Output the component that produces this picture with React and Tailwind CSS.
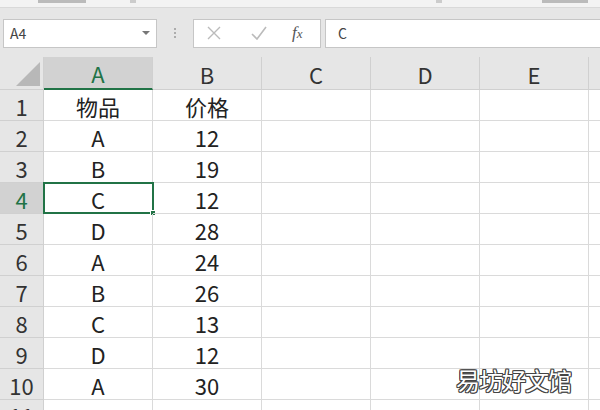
import React from 'react';

const cols = ['A', 'B', 'C', 'D', 'E'];
const rows = [
  ['物品', '价格'],
  ['A', '12'],
  ['B', '19'],
  ['C', '12'],
  ['D', '28'],
  ['A', '24'],
  ['B', '26'],
  ['C', '13'],
  ['D', '12'],
  ['A', '30'],
];

const font = { fontFamily: '"Noto Sans CJK SC", "Noto Sans", sans-serif' };

export default function App() {
  return (
    <div className="w-[600px] h-[410px] overflow-hidden bg-[#e6e6e6] relative" style={font}>
      {/* ribbon remnant */}
      <div className="h-[8px] bg-[#f3f3f3] border-b border-[#d9d9d9] flex items-start">
        <span className="ml-[38px] w-[48px] h-[3px] bg-[#bbb]" />
        <span className="ml-[44px] w-[6px] h-[3px] bg-[#ccc]" />
        <span className="ml-[300px] w-[6px] h-[3px] bg-[#ccc]" />
        <span className="ml-[100px] w-[46px] h-[3px] bg-[#bbb]" />
      </div>

      {/* formula bar */}
      <div className="flex items-center h-[30px] mt-[10px]">
        <div className="ml-[3px] w-[154px] h-[29px] bg-white border border-[#c6c6c6] flex items-center justify-between px-[6px]">
          <span className="text-[14px] text-[#444]">A4</span>
          <svg width="8" height="5" viewBox="0 0 8 5"><path d="M0 0 L8 0 L4 4 Z" fill="#777" /></svg>
        </div>
        <div className="w-[36px] flex flex-col items-center gap-[2px]">
          <span className="w-[2px] h-[2px] bg-[#999] rounded-full" />
          <span className="w-[2px] h-[2px] bg-[#999] rounded-full" />
          <span className="w-[2px] h-[2px] bg-[#999] rounded-full" />
        </div>
        <div className="w-[128px] h-[29px] bg-white border border-[#c6c6c6] flex items-center">
          <svg className="ml-[13px]" width="14" height="14" viewBox="0 0 14 14">
            <path d="M1 1 L13 13 M13 1 L1 13" stroke="#bbb" strokeWidth="1.4" />
          </svg>
          <svg className="ml-[30px]" width="16" height="14" viewBox="0 0 16 14">
            <path d="M1 8 L6 13 L15 1" stroke="#bbb" strokeWidth="1.6" fill="none" />
          </svg>
          <span className="ml-[25px] text-[17px] italic text-[#555]" style={{ fontFamily: '"Liberation Serif", serif' }}>
            f<span className="text-[13px]">x</span>
          </span>
        </div>
        <div className="ml-[4px] flex-1 h-[29px] bg-white border border-[#c6c6c6] border-r-0 flex items-center pl-[12px]">
          <span className="text-[14px] text-[#444]">C</span>
        </div>
      </div>

      {/* grid */}
      <div className="mt-[9px] bg-white">
        <div className="flex h-[33px]">
          <div className="w-[44px] shrink-0 bg-[#e6e6e6] border-r border-b border-[#d0d0d0] flex items-end justify-end p-[3px]">
            <svg width="24" height="24" viewBox="0 0 24 24"><path d="M24 0 L24 24 L0 24 Z" fill="#b8b8b8" /></svg>
          </div>
          {cols.map((c) => (
            <div
              key={c}
              className={`w-[109px] shrink-0 border-r border-[#d0d0d0] flex items-center justify-center text-[22px] pt-[2px] ${
                c === 'A' ? 'bg-[#d2d2d2] text-[#217346] border-b-2 border-b-[#217346]' : 'bg-[#e6e6e6] text-[#333] border-b border-b-[#d0d0d0]'
              }`}
            >
              {c}
            </div>
          ))}
          <div className="flex-1 bg-[#e6e6e6] border-b border-[#d0d0d0]" />
        </div>
        {rows.map((r, i) => (
          <div key={i} className="flex h-[31px]">
            <div
              className={`w-[44px] shrink-0 border-r border-b border-[#d0d0d0] flex items-center justify-center text-[22px] pt-[2px] ${
                i === 3 ? 'bg-[#d2d2d2] text-[#217346]' : 'bg-[#e6e6e6] text-[#333]'
              }`}
            >
              {i + 1}
            </div>
            {cols.map((c, j) => (
              <div
                key={c}
                className="w-[109px] shrink-0 border-r border-b border-[#dadada] flex items-center justify-center text-[22px] pt-[2px] text-[#222] relative"
              >
                {r[j] || ''}
                {i === 3 && j === 0 && (
                  <div className="absolute -left-[1px] -top-[1px] w-[111px] h-[32px] border-2 border-[#217346]">
                    <span className="absolute -right-[4px] -bottom-[4px] w-[6px] h-[6px] bg-[#217346] border border-white" />
                  </div>
                )}
              </div>
            ))}
            <div className="flex-1 border-b border-[#dadada]" />
          </div>
        ))}
        <div className="flex h-[20px]">
          <div className="w-[44px] shrink-0 bg-[#e6e6e6] border-r border-[#d0d0d0] flex justify-center text-[22px] text-[#333] leading-[30px]">
            11
          </div>
          {cols.map((c) => (
            <div key={c} className="w-[109px] shrink-0 border-r border-[#dadada]" />
          ))}
        </div>
      </div>

      {/* watermark */}
      <div
        className="absolute left-[456px] top-[362px] text-[24px] tracking-[-1px] text-white [text-shadow:1px_0_0_#444,-1px_0_0_#444,0_1px_0_#444,0_-1px_0_#444,1px_1px_0_#444,-1px_-1px_0_#444,1px_-1px_0_#444,-1px_1px_0_#444]"
        style={font}
      >
        易坊好文馆
      </div>
    </div>
  );
}
